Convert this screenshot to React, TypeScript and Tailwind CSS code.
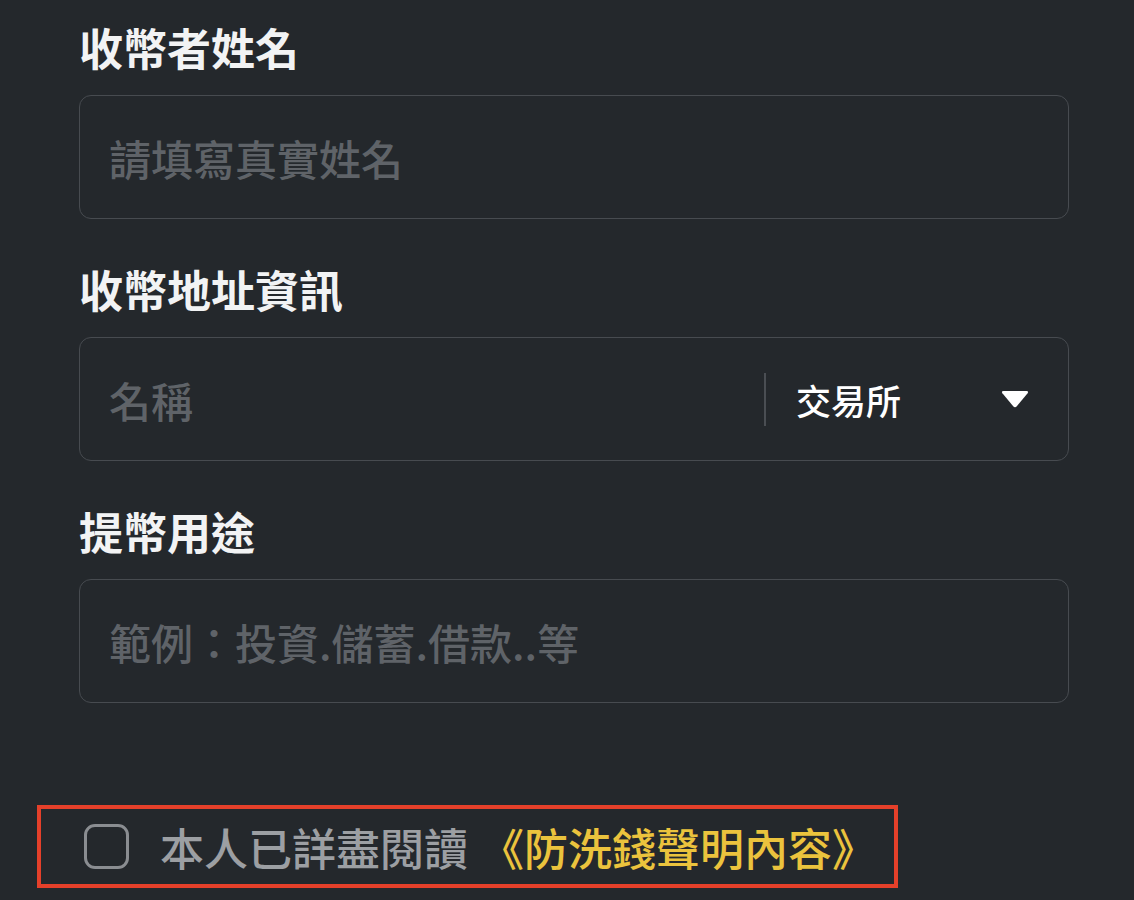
import React from "react";

const font = "font-['Noto_Sans_CJK_TC','Noto_Sans',sans-serif]";

function Label({ children, className = "" }: { children: React.ReactNode; className?: string }) {
  return (
    <div className={`text-[44px] leading-[44px] font-bold text-[#f2f3f4] ${className}`}>{children}</div>
  );
}

export default function App() {
  return (
    <div className={`min-h-[900px] w-full bg-[#24282c] ${font}`}>
      <div className="pl-[79px] pt-[25px] w-[1069px]">
        <Label>收幣者姓名</Label>
        <div className="mt-[26px] h-[124px] rounded-[12px] border border-[#474b50] flex items-center pl-[29px] pr-[29px]">
          <input
            className={`w-full bg-transparent outline-none text-[42px] font-medium text-white placeholder:text-[#5f6368] ${font}`}
            placeholder="請填寫真實姓名"
          />
        </div>

        <Label className="mt-[48px]">收幣地址資訊</Label>
        <div className="mt-[26px] h-[124px] rounded-[12px] border border-[#474b50] flex items-center pl-[29px]">
          <input
            className={`flex-1 min-w-0 bg-transparent outline-none text-[42px] font-medium text-white placeholder:text-[#5f6368] ${font}`}
            placeholder="名稱"
          />
          <div className="w-[2px] h-[53px] bg-[#4a4e53]" />
          <div className="w-[302px] flex items-center justify-between pl-[30px] pr-[38px]">
            <span className="text-[35px] leading-none font-medium text-white">交易所</span>
            <svg width="30" height="20" viewBox="0 0 30 20">
              <path d="M3.5 2 H26.5 Q29 2 27.6 4.2 L17 17 Q15 19.4 13 17 L2.4 4.2 Q1 2 3.5 2 Z" fill="#ffffff" />
            </svg>
          </div>
        </div>

        <Label className="mt-[48px]">提幣用途</Label>
        <div className="mt-[26px] h-[124px] rounded-[12px] border border-[#474b50] flex items-center pl-[29px] pr-[29px]">
          <input
            className={`w-full bg-transparent outline-none text-[42px] font-medium text-white placeholder:text-[#5f6368] ${font}`}
            placeholder="範例：投資.儲蓄.借款..等"
          />
        </div>
      </div>

      <div className="pl-[37px] mt-[102px]">
        <div className="w-[861px] h-[83px] border-[4px] border-[#e5402a] flex items-center pl-[43px]">
          <div className="w-[45px] h-[45px] rounded-[11px] border-[3px] border-[#8a8d91] shrink-0" />
          <div className="ml-[31px] text-[44px] leading-none font-medium whitespace-nowrap flex">
            <span className="text-[#9c9fa3]">本人已詳盡閱讀</span>
            <span className="ml-[12px] text-[#ebc33d]">《防洗錢聲明內容》</span>
          </div>
        </div>
      </div>
    </div>
  );
}
